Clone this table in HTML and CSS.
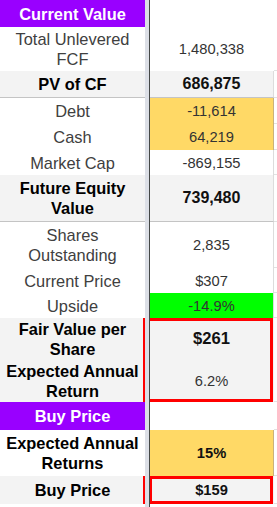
FILE: index.html
```html
<!DOCTYPE html>
<html>
<head>
<meta charset="utf-8">
<link rel="stylesheet" href="styles.css">
</head>
<body>
<div class="sheet">
  <div class="row h27">
    <div class="label head">Current Value</div><div class="freeze"></div><div class="val nob"></div><div class="tail"></div>
  </div>
  <div class="row h44">
    <div class="label">Total Unlevered FCF</div><div class="freeze"></div><div class="val nob">1,480,338</div><div class="tail line"></div>
  </div>
  <div class="row h27 grey sep">
    <div class="label bold">PV of CF</div><div class="freeze"></div><div class="val bold">686,875</div><div class="tail line"></div>
  </div>
  <div class="row h26">
    <div class="label">Debt</div><div class="freeze"></div><div class="val yellow">-11,614</div><div class="tail line"></div>
  </div>
  <div class="row h26">
    <div class="label">Cash</div><div class="freeze"></div><div class="val yellow">64,219</div><div class="tail line"></div>
  </div>
  <div class="row h25">
    <div class="label">Market Cap</div><div class="freeze"></div><div class="val">-869,155</div><div class="tail line"></div>
  </div>
  <div class="row h47 grey sep">
    <div class="label bold">Future Equity Value</div><div class="freeze"></div><div class="val bold">739,480</div><div class="tail line"></div>
  </div>
  <div class="row h46">
    <div class="label">Shares Outstanding</div><div class="freeze"></div><div class="val">2,835</div><div class="tail line"></div>
  </div>
  <div class="row h25">
    <div class="label">Current Price</div><div class="freeze"></div><div class="val">$307</div><div class="tail line"></div>
  </div>
  <div class="row h25">
    <div class="label">Upside</div><div class="freeze"></div><div class="val green">-14.9%</div><div class="tail line"></div>
  </div>
  <div class="row h41 grey">
    <div class="label bold redr">Fair Value per Share</div><div class="freeze"></div><div class="val bold big box-top">$261</div><div class="tail"></div>
  </div>
  <div class="row h43 grey">
    <div class="label bold redr">Expected Annual Return</div><div class="freeze"></div><div class="val box-bottom">6.2%</div><div class="tail line"></div>
  </div>
  <div class="row h28">
    <div class="label head">Buy Price</div><div class="freeze"></div><div class="val nob"></div><div class="tail line"></div>
  </div>
  <div class="row h46">
    <div class="label bold">Expected Annual Returns</div><div class="freeze"></div><div class="val yellow bold small-bold">15%</div><div class="tail line"></div>
  </div>
  <div class="row h28 grey">
    <div class="label bold redr">Buy Price</div><div class="freeze"></div><div class="val bold small-bold box-all">$159</div><div class="tail line"></div>
  </div>
  <div class="row h3">
    <div class="label"></div><div class="freeze"></div><div class="val nob"></div><div class="tail"></div>
  </div>
</div>
</body>
</html>
```

FILE: styles.css
```css
html, body {
  margin: 0;
  padding: 0;
  background: #ffffff;
}

body {
  font-family: "Liberation Sans", Arial, sans-serif;
  width: 277px;
  overflow: hidden;
}

.sheet {
  display: flex;
  flex-direction: column;
  width: 277px;
}

.row {
  display: grid;
  grid-template-columns: 145px 5px 124px 3px;
  box-sizing: border-box;
}

.h3 { height: 3px; }
.h25 { height: 25px; }
.h26 { height: 26px; }
.h27 { height: 27px; }
.h28 { height: 28px; }
.h41 { height: 41px; }
.h43 { height: 43px; }
.h44 { height: 44px; }
.h46 { height: 46px; }
.h47 { height: 47px; }

.label,
.val {
  display: flex;
  align-items: center;
  justify-content: center;
  text-align: center;
  box-sizing: border-box;
  overflow: hidden;
}

.label {
  font-size: 16.4px;
  line-height: 20px;
  color: #404040;
  padding: 0 4px;
}

.val {
  font-size: 14.7px;
  line-height: 18px;
  color: #333333;
  border-right: 1px solid #dcdcdc;
}

.val.nob {
  border-right-color: transparent;
}

.freeze {
  background: #dcdfe6;
  border-right: 1px solid #444746;
  box-sizing: border-box;
}

.tail {
  box-sizing: border-box;
}

.tail.line {
  border-bottom: 1px solid #e2e2e2;
}

.bold {
  font-weight: bold;
  color: #000000;
}

.val.bold {
  font-size: 16px;
  color: #111111;
}

.val.small-bold {
  font-size: 14.7px;
}

.val.big {
  font-size: 16.6px;
}

.grey .label,
.grey .val {
  background: #f3f3f3;
}

.sep .label,
.sep .val {
  border-bottom: 1px solid #c4c4c4;
}

.label.head {
  background: #9900ff;
  color: #ffffff;
  font-weight: bold;
  font-size: 16.4px;
}

.val.yellow {
  background: #ffd966;
  border-right-color: #c9b27a;
}

.val.green {
  background: #00ff00;
}

.label.redr {
  box-shadow: inset -2px 0 0 #ff0000;
}

.val.box-top {
  box-shadow: inset 0 3px 0 #ff0000, inset -3px 0 0 #ff0000;
  border-right-color: transparent;
}

.val.box-bottom {
  box-shadow: inset 0 -3px 0 #ff0000, inset -3px 0 0 #ff0000;
  border-right-color: transparent;
}

.val.box-all {
  box-shadow: inset 0 3px 0 #ff0000, inset -3px 0 0 #ff0000, inset 0 -3px 0 #ff0000, inset 2px 0 0 #ff0000;
  border-right-color: transparent;
}
```
